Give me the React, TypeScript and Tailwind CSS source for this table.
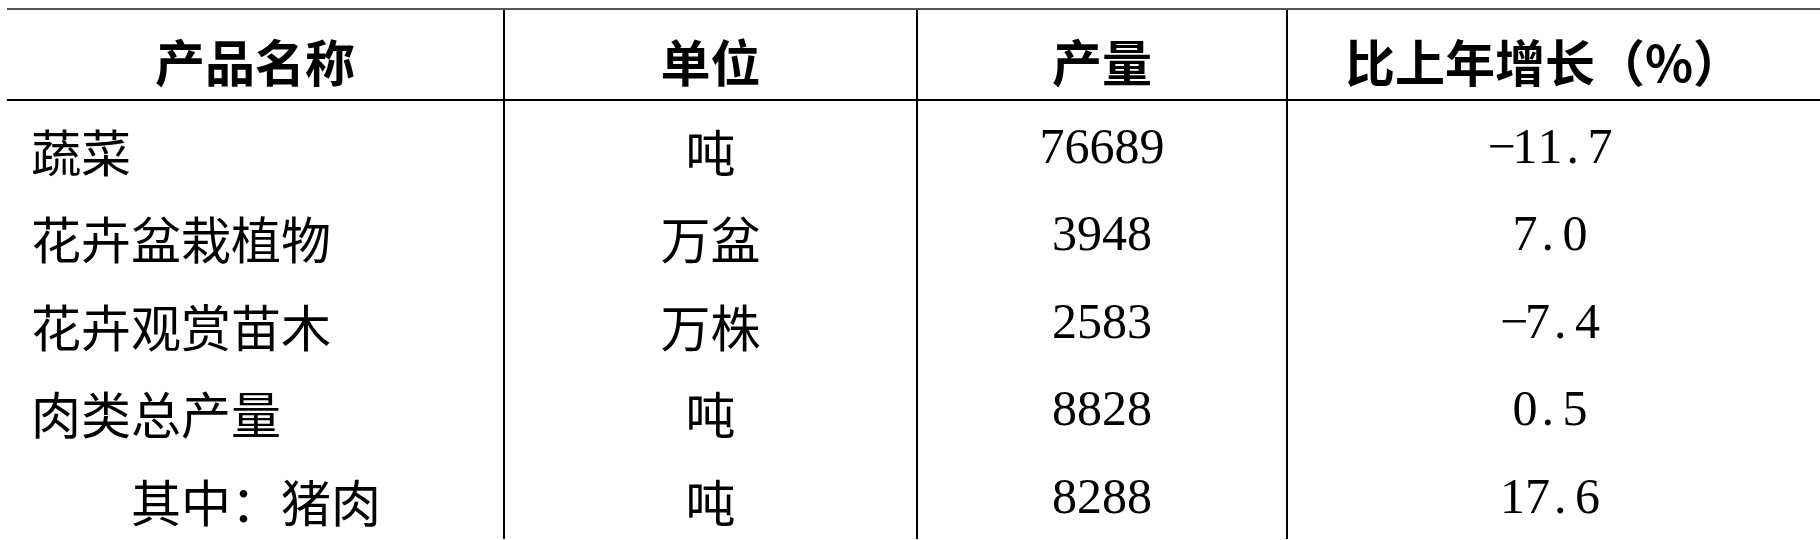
const rows = [
  { name: "蔬菜", unit: "吨", output: "76689", growth: "-11.7" },
  { name: "花卉盆栽植物", unit: "万盆", output: "3948", growth: "7.0" },
  { name: "花卉观赏苗木", unit: "万株", output: "2583", growth: "-7.4" },
  { name: "肉类总产量", unit: "吨", output: "8828", growth: "0.5" },
  { name: "其中：猪肉", unit: "吨", output: "8288", growth: "17.6", indent: true },
]

const cjk = "font-['Noto_Sans_CJK_SC','Noto_Sans_CJK_JP',sans-serif]"
const num = "font-['Liberation_Serif',serif]"

// half-width fixed pitch, like the source document's 宋体 digits
function Mono({ value }: { value: string }) {
  return (
    <span className="flex">
      {value.split("").map((ch, i) =>
        ch === "." ? (
          <span key={i} className="w-[25px] text-left pl-[4px]">
            .
          </span>
        ) : (
          <span key={i} className="w-[25px] text-center">
            {ch === "-" ? "−" : ch}
          </span>
        ),
      )}
    </span>
  )
}

export default function App() {
  return (
    <div className="w-[1820px] h-[540px] overflow-hidden bg-white text-black pt-[8px] pl-[7px]">
      <div className="w-[1813px] border-t-2 border-[#555]">
        {/* header */}
        <div className={`flex h-[91px] border-b-2 border-black text-[50px] leading-none font-bold ${cjk}`}>
          <div className="w-[498px] border-r-2 border-black flex items-center justify-center pt-[10px]">产品名称</div>
          <div className="w-[413px] border-r-2 border-black flex items-center justify-center pt-[10px]">单位</div>
          <div className="w-[370px] border-r-2 border-black flex items-center justify-center pt-[10px]">产量</div>
          <div className="flex-1 flex items-center justify-center pt-[10px] pr-[20px]">比上年增长（%）</div>
        </div>

        {rows.map((r) => (
          <div key={r.name} className="flex h-[87.5px] text-[50px] leading-none">
            <div
              className={`w-[498px] border-r-2 border-black flex items-center pt-[10px] ${cjk} ${r.indent ? "pl-[124px]" : "pl-[24px]"}`}
            >
              {r.name}
            </div>
            <div className={`w-[413px] border-r-2 border-black flex items-center justify-center pt-[10px] ${cjk}`}>
              {r.unit}
            </div>
            <div className={`w-[370px] border-r-2 border-black flex items-center justify-center pt-[2px] ${num}`}>
              <Mono value={r.output} />
            </div>
            <div className={`flex-1 flex items-center justify-center pt-[2px] pl-[6px] pr-[14px] ${num}`}>
              <Mono value={r.growth} />
            </div>
          </div>
        ))}
      </div>
    </div>
  )
}
